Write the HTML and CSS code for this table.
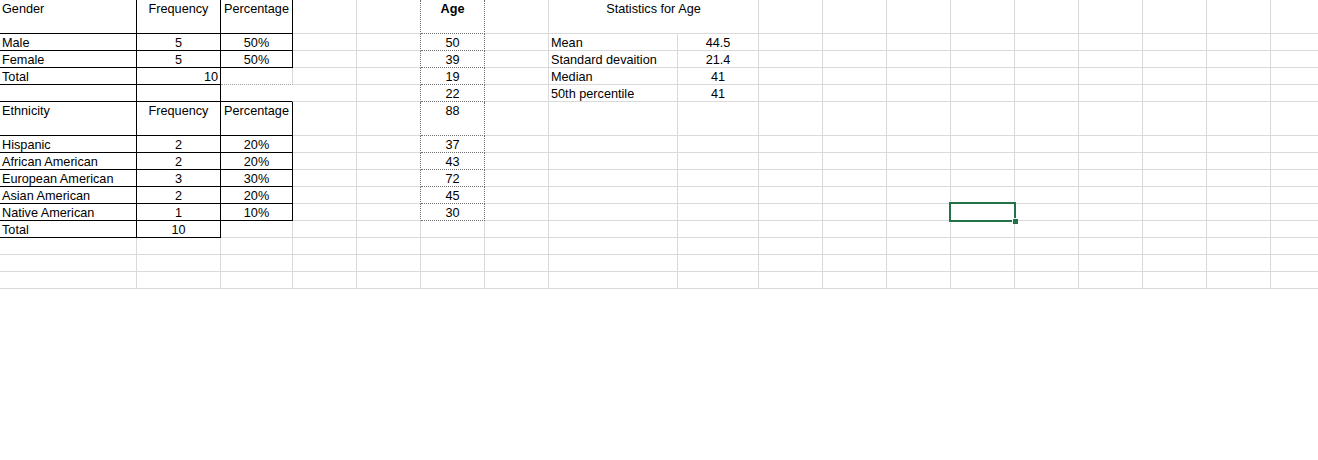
FILE: index.html
```html
<!DOCTYPE html>
<html lang="en">
<head>
<meta charset="utf-8">
<title>Sheet</title>
<link rel="stylesheet" href="styles.css">
</head>
<body>
<div class="sheet">
  <div class="row tall">
    <div class="c kr kb">Gender</div><div class="c ctr kr kb">Frequency</div><div class="c ctr kr kb">Percentage</div><div class="c"></div><div class="c dr"></div><div class="c ctr b dr db">Age</div><div class="c"></div><div class="c ctr span2">Statistics for Age</div><div class="c"></div><div class="c"></div><div class="c"></div><div class="c"></div><div class="c"></div><div class="c"></div><div class="c"></div><div class="c"></div><div class="c"></div>
  </div>
  <div class="row">
    <div class="c kr kb">Male</div><div class="c ctr kr kb">5</div><div class="c ctr kr kb">50%</div><div class="c"></div><div class="c dr"></div><div class="c ctr dr db">50</div><div class="c"></div><div class="c">Mean</div><div class="c ctr">44.5</div><div class="c"></div><div class="c"></div><div class="c"></div><div class="c"></div><div class="c"></div><div class="c"></div><div class="c"></div><div class="c"></div><div class="c"></div>
  </div>
  <div class="row">
    <div class="c kr kb">Female</div><div class="c ctr kr kb">5</div><div class="c ctr kr kb">50%</div><div class="c"></div><div class="c dr"></div><div class="c ctr dr db">39</div><div class="c"></div><div class="c">Standard devaition</div><div class="c ctr">21.4</div><div class="c"></div><div class="c"></div><div class="c"></div><div class="c"></div><div class="c"></div><div class="c"></div><div class="c"></div><div class="c"></div><div class="c"></div>
  </div>
  <div class="row">
    <div class="c kr kb">Total</div><div class="c rt kr kb">10</div><div class="c lb"></div><div class="c"></div><div class="c dr"></div><div class="c ctr dr db">19</div><div class="c"></div><div class="c">Median</div><div class="c ctr">41</div><div class="c"></div><div class="c"></div><div class="c"></div><div class="c"></div><div class="c"></div><div class="c"></div><div class="c"></div><div class="c"></div><div class="c"></div>
  </div>
  <div class="row">
    <div class="c kr kb"></div><div class="c kr kb"></div><div class="c nr kb"></div><div class="c"></div><div class="c dr"></div><div class="c ctr dr db">22</div><div class="c"></div><div class="c">50th percentile</div><div class="c ctr">41</div><div class="c"></div><div class="c"></div><div class="c"></div><div class="c"></div><div class="c"></div><div class="c"></div><div class="c"></div><div class="c"></div><div class="c"></div>
  </div>
  <div class="row tall">
    <div class="c kr kb">Ethnicity</div><div class="c ctr kr kb">Frequency</div><div class="c ctr kr kb">Percentage</div><div class="c"></div><div class="c dr"></div><div class="c ctr dr db">88</div><div class="c"></div><div class="c"></div><div class="c"></div><div class="c"></div><div class="c"></div><div class="c"></div><div class="c"></div><div class="c"></div><div class="c"></div><div class="c"></div><div class="c"></div><div class="c"></div>
  </div>
  <div class="row">
    <div class="c kr kb">Hispanic</div><div class="c ctr kr kb">2</div><div class="c ctr kr kb">20%</div><div class="c"></div><div class="c dr"></div><div class="c ctr dr db">37</div><div class="c"></div><div class="c"></div><div class="c"></div><div class="c"></div><div class="c"></div><div class="c"></div><div class="c"></div><div class="c"></div><div class="c"></div><div class="c"></div><div class="c"></div><div class="c"></div>
  </div>
  <div class="row">
    <div class="c kr kb">African American</div><div class="c ctr kr kb">2</div><div class="c ctr kr kb">20%</div><div class="c"></div><div class="c dr"></div><div class="c ctr dr db">43</div><div class="c"></div><div class="c"></div><div class="c"></div><div class="c"></div><div class="c"></div><div class="c"></div><div class="c"></div><div class="c"></div><div class="c"></div><div class="c"></div><div class="c"></div><div class="c"></div>
  </div>
  <div class="row">
    <div class="c kr kb">European American</div><div class="c ctr kr kb">3</div><div class="c ctr kr kb">30%</div><div class="c"></div><div class="c dr"></div><div class="c ctr dr db">72</div><div class="c"></div><div class="c"></div><div class="c"></div><div class="c"></div><div class="c"></div><div class="c"></div><div class="c"></div><div class="c"></div><div class="c"></div><div class="c"></div><div class="c"></div><div class="c"></div>
  </div>
  <div class="row">
    <div class="c kr kb">Asian American</div><div class="c ctr kr kb">2</div><div class="c ctr kr kb">20%</div><div class="c"></div><div class="c dr"></div><div class="c ctr dr db">45</div><div class="c"></div><div class="c"></div><div class="c"></div><div class="c"></div><div class="c"></div><div class="c"></div><div class="c"></div><div class="c"></div><div class="c"></div><div class="c"></div><div class="c"></div><div class="c"></div>
  </div>
  <div class="row">
    <div class="c kr kb">Native American</div><div class="c ctr kr kb">1</div><div class="c ctr kr kb">10%</div><div class="c"></div><div class="c dr"></div><div class="c ctr dr db">30</div><div class="c"></div><div class="c"></div><div class="c"></div><div class="c"></div><div class="c"></div><div class="c"></div><div class="c active"><span class="sel"><span class="handle"></span></span></div><div class="c"></div><div class="c"></div><div class="c"></div><div class="c"></div><div class="c"></div>
  </div>
  <div class="row">
    <div class="c kr kb">Total</div><div class="c ctr kr kb">10</div><div class="c"></div><div class="c"></div><div class="c"></div><div class="c"></div><div class="c"></div><div class="c"></div><div class="c"></div><div class="c"></div><div class="c"></div><div class="c"></div><div class="c"></div><div class="c"></div><div class="c"></div><div class="c"></div><div class="c"></div><div class="c"></div>
  </div>
  <div class="row">
    <div class="c"></div><div class="c"></div><div class="c"></div><div class="c"></div><div class="c"></div><div class="c"></div><div class="c"></div><div class="c"></div><div class="c"></div><div class="c"></div><div class="c"></div><div class="c"></div><div class="c"></div><div class="c"></div><div class="c"></div><div class="c"></div><div class="c"></div><div class="c"></div>
  </div>
  <div class="row">
    <div class="c"></div><div class="c"></div><div class="c"></div><div class="c"></div><div class="c"></div><div class="c"></div><div class="c"></div><div class="c"></div><div class="c"></div><div class="c"></div><div class="c"></div><div class="c"></div><div class="c"></div><div class="c"></div><div class="c"></div><div class="c"></div><div class="c"></div><div class="c"></div>
  </div>
  <div class="row">
    <div class="c"></div><div class="c"></div><div class="c"></div><div class="c"></div><div class="c"></div><div class="c"></div><div class="c"></div><div class="c"></div><div class="c"></div><div class="c"></div><div class="c"></div><div class="c"></div><div class="c"></div><div class="c"></div><div class="c"></div><div class="c"></div><div class="c"></div><div class="c"></div>
  </div>
</div>
</body>
</html>
```

FILE: styles.css
```css
html, body {
  margin: 0;
  padding: 0;
  background: #ffffff;
  overflow: hidden;
}

.sheet {
  width: 1318px;
  overflow: hidden;
  font-family: "Liberation Sans", Arial, sans-serif;
  font-size: 12.7px;
  color: #000000;
}

.row {
  display: grid;
  grid-template-columns: 137px 84px 72px 64px 64px 64px 64px 129px 81px repeat(9, 64px);
  grid-template-rows: 17px;
  height: 17px;
  width: 1334px;
}

.row.tall {
  grid-template-rows: 34px;
  height: 34px;
}

.c {
  box-sizing: border-box;
  border-right: 1px solid #dadada;
  border-bottom: 1px solid #dadada;
  padding: 1px 2px 0 2px;
  line-height: 16px;
  white-space: nowrap;
  min-width: 0;
  min-height: 0;
}

.span2 {
  grid-column: span 2;
}

.ctr { text-align: center; }
.rt { text-align: right; }
.b { font-weight: bold; }

.kr { border-right-color: #000000; }
.kb { border-bottom-color: #000000; }
.nr { border-right-color: #ffffff; }
.dr { border-right: 1px dotted #707070; }
.db { border-bottom: 1px dotted #707070; }
.lb { border-bottom: 1px dotted #a0a0a0; }

.active {
  position: relative;
}

.sel {
  position: absolute;
  left: -2px;
  top: -2px;
  width: 67px;
  height: 20px;
  box-sizing: border-box;
  border: 2px solid #217346;
}

.handle {
  position: absolute;
  right: -4px;
  bottom: -4px;
  width: 5px;
  height: 5px;
  background: #217346;
  border-left: 1px solid #ffffff;
  border-top: 1px solid #ffffff;
}
```
